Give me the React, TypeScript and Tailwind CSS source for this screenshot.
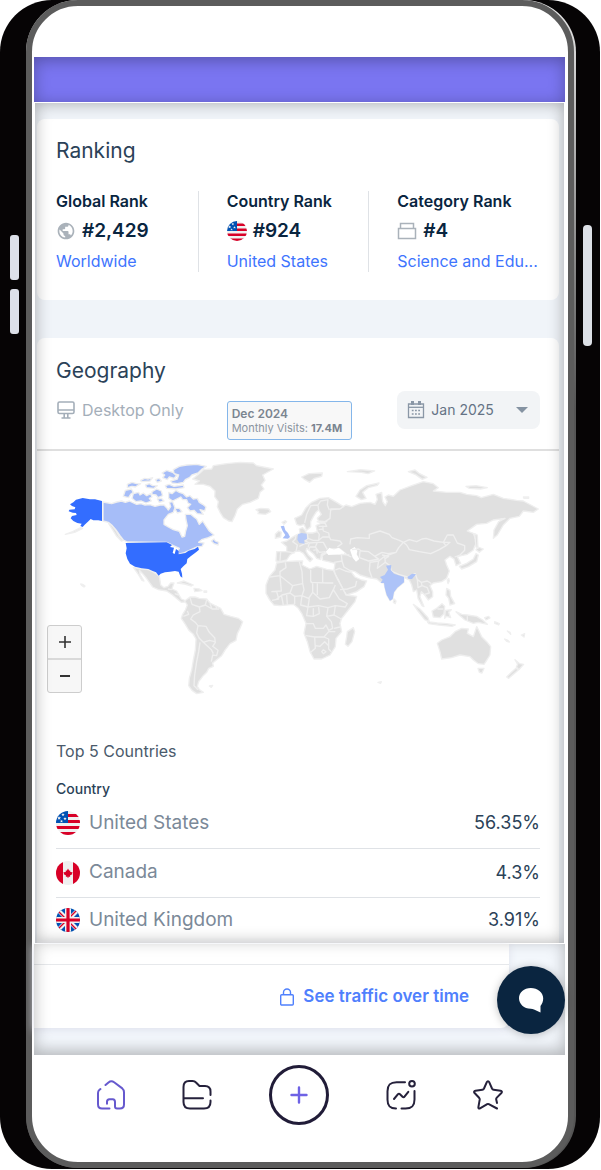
import { useState } from 'react';
import type { ReactNode } from 'react';
import { MdPublic } from 'react-icons/md';

const countries = [
  { name: 'United States', share: '56.35%', flag: 'us' },
  { name: 'Canada', share: '4.3%', flag: 'ca' },
  { name: 'United Kingdom', share: '3.91%', flag: 'gb' },
] as const;

type FlagCode = (typeof countries)[number]['flag'];

function Flag({ code, className }: { code: FlagCode; className: string }) {
  return (
    <svg viewBox="0 0 24 24" className={className} aria-hidden="true">
      <clipPath id={`flag-${code}`}>
        <circle cx="12" cy="12" r="12" />
      </clipPath>
      <g clipPath={`url(#flag-${code})`}>
        {code === 'us' && (
          <>
            <path fill="#f0f0f0" d="M0 0h24v24H0z" />
            <path fill="#d80027" d="M12 3h12v3H12zM12 9h12v3H12zM0 15h24v3H0zM0 21h24v3H0z" />
            <path fill="#0052b4" d="M0 0h12v12H0z" />
            <path
              fill="#f0f0f0"
              d="M3 5l.5 1.300H5l-1 1 .4 1.400L3 8l-1.200.7.4-1.400-1-1h1.300zM7 2l.4 1.100h1.200l-.9.8.3 1.200-1-.7-1 .7.3-1.200-.9-.8h1.200zM9 6l.4 1.100h1.200l-.9.8.3 1.200-1-.7-1 .7.3-1.200-.9-.8h1.200zM5.500 8.800l.4 1h1l-.7.7.3 1-1-.6-1 .6.3-1-.7-.7h1z"
            />
          </>
        )}
        {code === 'ca' && (
          <>
            <path fill="#f0f0f0" d="M0 0h24v24H0z" />
            <path fill="#d80027" d="M0 0h7v24H0zM17 0h7v24h-7z" />
            <path
              fill="#d80027"
              d="M12 7.500l1.200 2.200 1-.5-.2 2 .9-.8.4.8 1.300-.2-.6 1.500.6.5-2.600 1.600.2 1.100h-1.800V17h-.8v-1.300H9.800l.2-1.100L7.400 13l.6-.5-.6-1.500 1.300.2.4-.8.900.8-.2-2 1 .5z"
            />
          </>
        )}
        {code === 'gb' && (
          <>
            <path fill="#0052b4" d="M0 0h24v24H0z" />
            <path stroke="#f0f0f0" strokeWidth="4" d="M2 2l20 20M22 2L2 22" />
            <path stroke="#d80027" strokeWidth="1.400" d="M2 3l20 20M22 1L2 21" />
            <path stroke="#f0f0f0" strokeWidth="6" d="M12 0v24M0 12h24" />
            <path stroke="#d80027" strokeWidth="3.200" d="M12 0v24M0 12h24" />
          </>
        )}
      </g>
    </svg>
  );
}

function CategoryIcon() {
  return (
    <svg viewBox="0 0 20 20" className="h-5 w-5" fill="none" stroke="#aab2ba" strokeWidth="1.500" aria-hidden="true">
      <path d="M1.500 7.500h17v10h-17zM3.500 7.500v-5h13v5" />
    </svg>
  );
}

function DesktopIcon() {
  return (
    <svg viewBox="0 0 20 20" className="h-5 w-5" fill="none" stroke="#a4aeb9" strokeWidth="1.600" aria-hidden="true">
      <rect x="2" y="2" width="16" height="11.500" rx="1.500" />
      <path d="M2 10h16M8.200 13.500v4M11.800 13.500v4M5.500 18h9" />
    </svg>
  );
}

function CalendarIcon() {
  return (
    <svg viewBox="0 0 18 18" className="h-[18px] w-[18px] shrink-0" fill="none" stroke="#8a97a6" aria-hidden="true">
      <path strokeWidth="1.300" d="M1.500 3h15v13.500h-15z" />
      <path strokeWidth="1.300" d="M1.500 6.300h15" />
      <path strokeWidth="2" d="M4 1h3M11 1h3M4 3h3M11 3h3" />
      <path strokeWidth="1.600" strokeDasharray="1.800 1.400" d="M4.800 9.500h8.500M4.800 13h8.500" />
    </svg>
  );
}

const americas = [
  // greenland, iceland
  'M458,72L480,54 490,44 515,42 520,32 560,26 600,22 640,24 650,32 700,42 668,60 675,76 664,90 672,102 660,112 655,130 630,142 608,148 592,162 585,182 576,200 566,198 550,188 540,172 532,155 535,140 524,125 525,108 510,94 490,88 465,88 478,78Z',
  'M648,164l14,-4 24,2 6,8 -16,8 -22,-2 2,-6Z',
  // mexico and central america
  'M280,337L305,342 325,344 338,350 348,356 358,364 360,376 362,390 372,398 384,394 392,384 402,384 398,395 396,402 410,408 418,422 424,432 434,436 436,441 424,442 412,432 398,420 380,408 355,404 338,396 328,382 318,368 308,356 298,346 300,358 312,378 306,376 292,354Z',
  // south america
  'M434,438L450,426 465,426 478,430 500,432 510,444 525,452 542,460 552,478 572,484 595,490 608,500 600,520 592,536 588,556 570,566 556,584 545,602 530,614 518,624 520,634 506,640 500,652 488,664 476,680 472,694 478,704 490,712 470,716 456,706 446,692 448,670 455,645 460,615 466,585 468,552 460,538 446,525 436,508 424,490 428,478 436,465 442,450Z',
  'M412,384l20,-6 28,12 -6,3 -20,-6ZM462,400l16,2 8,5 -22,3ZM492,408h8v4h-8ZM508,693l10,-2 -4,6ZM122,387l6,1 7,5 -3,3 -7,-5ZM76,238l22,-8 24,-12 6,2 -24,12ZM206,206l8,2 14,18 10,18 12,12 -6,2 -14,-14 -10,-16Z',
];

const oldWorld = [
  // mainland europe and asia
  'M64,262L80,258 98,246 112,238 120,236 118,222 128,218 134,224 140,234 158,234 172,230 168,212 185,204 200,200 200,185 208,165 240,160 258,150 275,155 300,145 330,142 345,148 352,134 348,118 365,112 368,140 376,152 382,140 375,126 385,120 400,124 420,105 455,92 490,80 520,86 535,98 520,108 560,112 600,112 620,118 650,122 664,128 700,118 730,130 770,136 790,138 835,162 820,172 790,168 778,184 750,190 730,210 712,240 700,250 702,225 716,200 735,190 700,195 680,205 650,208 622,228 640,235 650,260 640,285 622,298 604,302 592,305 602,325 588,332 582,312 570,304 555,315 560,330 568,348 560,370 545,380 520,384 510,392 518,410 518,425 505,435 494,420 484,410 480,425 492,455 486,452 474,430 470,405 460,410 455,390 448,375 432,368 432,382 412,398 402,412 398,432 390,437 380,420 372,385 362,382 350,372 325,368 300,360 285,350 270,346 285,366 305,375 320,378 312,395 290,410 260,420 250,405 238,380 226,358 222,345 225,325 205,320 188,316 186,302 200,294 240,298 258,296 240,282 215,282 200,290 184,298 182,314 170,310 160,296 140,280 138,288 145,300 158,312 150,320 142,312 130,295 118,288 105,290 90,300 80,315 60,320 48,318 50,290 80,290 80,275Z',
  // scandinavia
  'M110,208L104,190 125,180 138,158 155,142 180,130 205,128 230,142 250,155 240,162 212,162 210,190 195,200 176,198 172,190 184,178 176,165 168,172 160,185 152,200 152,215 140,226 132,208 120,212Z',
  // africa
  'M50,324L75,320 110,318 128,318 126,330 150,342 170,334 200,343 220,346 232,372 245,395 258,420 290,424 285,440 265,465 245,490 240,505 245,530 228,550 226,575 210,600 185,612 162,612 150,590 142,560 132,535 138,505 125,475 115,460 100,448 60,452 42,450 30,436 18,415 18,390 28,365 45,345Z',
  'M262,530L280,518 284,530 276,560 264,574 256,568 260,545Z',
  // australia and new zealand
  'M532,565L545,555 570,545 585,530 605,520 625,522 622,535 640,545 650,515 658,530 665,545 680,560 692,575 690,600 680,616 672,628 655,626 640,615 630,605 600,600 575,608 545,612 540,590ZM654,640h18l-6,14 -8,-2Z',
  'M765,614l14,12 12,2 -14,16 -8,-8 4,-8ZM768,640l8,4 -14,12 -16,14 -6,-4 12,-12Z',
  // indonesia, new guinea, philippines
  'M460,448l20,14 24,26 4,12 -14,-6 -20,-26ZM502,500l30,4 28,2 26,4 -10,4 -40,-4 -30,-4ZM516,468l14,-8 16,-14 8,8 -2,22 -12,12 -20,-2ZM556,466l18,-2 -8,8 6,16 -12,-4 -6,6Z',
  'M588,470L605,478 622,480 650,484 668,495 682,508 655,502 640,505 615,495 600,482ZM560,400l10,6 2,18 12,22 -14,4 -4,-20 -8,-10ZM562,376l4,-6 2,8 -4,8ZM674,488l12,-4 4,5 -12,6ZM704,500l14,6 -2,4 -12,-5Z',
  // japan and sakhalin
  'M598,334L620,325 640,312 648,296 655,300 650,320 625,335 605,342ZM648,284l6,-8 16,6 -12,10ZM644,236l8,4 2,40 -6,-4Z',
  // arctic islands
  'M288,124L300,105 320,92 357,84 352,91 325,98 308,112 318,130 304,134ZM125,66l22,-10 40,-2 -2,10 -22,6 -14,12 -14,-8ZM262,50l40,-6 42,4 -20,8 -20,-4ZM445,50l20,-5 12,10 24,12 -14,6 -20,-14ZM618,94l30,-2 34,6 -20,4 -34,-2ZM790,126h16v4h-14Z',
  'M46,238l10,-10 8,4 -2,14 -16,4ZM402,432l6,6 -2,8 -6,-4ZM66,202l10,-5 4,3 -8,8ZM354,682l10,-2 -2,5ZM734,552l10,4 4,5 -8,-2ZM784,540l10,-4 -2,10ZM742,528l8,4 2,6Z',
];

const canada = [
  'M189,141L215,146 230,141 245,138 256,142 268,138 290,148 303,146 315,150 330,149 345,154 360,150 372,150 380,158 385,165 392,155 388,142 398,140 405,158 400,172 385,178 372,195 372,208 385,216 400,224 418,229 426,246 434,244 437,228 442,212 438,195 436,178 452,178 462,186 470,192 478,208 488,198 497,212 508,228 522,240 505,248 485,254 476,262 492,264 486,274 470,276 448,286 430,294 415,298 413,288 418,280 400,272 380,262 262,261 250,255 240,242 228,225 215,210 205,202 189,198Z',
  // baffin
  'M386,112L396,116 408,106 418,112 430,116 440,126 450,122 460,132 472,130 478,142 488,148 498,156 494,168 480,164 490,178 472,176 462,166 450,168 442,158 452,148 444,144 440,134 428,134 422,126 410,132 398,138 386,130Z',
  // victoria and banks
  'M256,106L274,102 280,112 272,118 266,128 250,124ZM280,116L296,112 300,120 310,114 320,122 332,116 336,126 328,130 334,138 318,144 304,138 288,140 276,130Z',
  // ellesmere
  'M400,44L418,34 440,30 470,28 499,34 484,44 474,54 456,60 448,68 436,74 430,82 412,86 396,84 392,78 412,72 416,60 402,56Z',
  'M366,54l14,-8 18,6 12,10 -8,8 -14,-4 -6,8 -14,-6 6,-8ZM376,92l12,-4 14,6 28,-4 2,8 -24,4 -28,-2ZM262,88l14,-6 14,4 12,0 -16,10 -10,-2 -14,4ZM302,76l12,-6 10,2 14,-4 -8,10 -26,2ZM336,110l14,-8 14,6 4,14 -14,6 -6,-8 -12,-2ZM316,90l12,-4 10,6 14,0 -10,8 -22,-2ZM346,74l12,-4 6,8 -12,4ZM352,132l12,-2 8,8 -14,4ZM404,160l14,0 8,10 -14,4ZM514,258l8,-6 4,6 10,4 -2,8 -12,-4Z',
];

const usa = [
  'M186,138L165,133 150,133 128,129 108,134 100,142 90,148 96,153 106,157 104,163 88,164 86,169 98,173 108,174 110,180 96,183 92,190 100,198 112,204 125,206 121,213 128,216 134,209 146,198 152,192 160,196 175,196 186,198Z',
  'M257,264L380,262 396,270 390,276 402,278 398,294 404,297 408,282 416,288 416,298 436,294 446,287 464,282 474,275 477,284 468,292 452,304 442,312 440,325 430,334 422,342 426,356 427,368 421,364 416,350 405,348 390,350 375,352 362,356 356,362 348,352 338,348 325,342 305,340 285,335 270,326 262,312 257,295 260,280Z',
];

const americaBorders =
  'M450,428L456,448 478,456 480,470 460,480 452,492 466,502 474,512 498,514 508,532 524,548 526,562 518,574 534,586 530,602 518,600 514,620M430,484L446,478 442,468M474,512L470,534 478,550 490,562 508,556 524,560M480,562L476,590 470,620 464,660 462,692 474,704M490,562L514,584 520,596M478,456L496,450 500,434M496,450L516,462 538,462M510,446L516,462M528,452L530,464M384,402L396,404M404,416L416,420';

const oldWorldBorders = [
  // africa
  'M30,366L60,362 60,350 78,338 76,322M60,362L98,392 128,386 126,350 118,320M60,362L64,408 34,410M98,392L90,414 66,420 50,432M128,386L132,404 126,422 104,424 90,414M152,345L152,378 158,386 158,412 146,430 126,422M152,382L200,384 220,384M188,343L188,384M158,412L180,432 208,428 220,404 226,390M104,424L104,448M126,422L122,450 144,456 148,430M144,456L176,452 204,458 226,452 256,456 262,446 238,432 220,404M144,456L140,482 160,484 160,460M138,506L160,506 166,520 190,520 198,510 206,526 218,520 214,500 200,484 204,458M226,452L222,480 244,492M200,484L222,480M164,546L192,546 206,530 226,530M138,542L164,546 166,580 152,592M166,572L180,574 194,560 206,572 206,582 214,590M192,546L206,552 206,572M190,584l8,6 -8,6 -5,-6ZM222,520L240,516M64,420L70,450M80,420L82,450M50,410L56,432 36,436M172,384L172,420M176,456L178,476 160,484',
  // europe
  'M62,290L60,318M80,290L104,294M108,240L106,252 98,260 112,270 108,290M142,236L144,250 160,256 176,256 178,238 172,230M144,266L134,266 118,274M144,250L136,258 148,264 172,262 190,262 202,284M172,262L166,276 178,292 196,290M176,256L188,246 208,246 206,234 190,228 188,212M208,246L212,254 240,258 246,266 232,276M148,264L144,278M166,276L150,276 146,286M170,200L196,206 200,214 176,214M176,224L190,222M176,165L174,150 152,152 140,178 134,204M174,150L182,138 204,134 202,150 208,165M160,286L170,284 172,296',
  // asia
  'M270,268L272,252 292,248 328,250 328,238 360,228 388,238 396,248 418,256 430,262 416,278 408,292 384,296 366,292 344,304 326,290 304,288 296,282 276,284M430,262L448,254 470,260 486,252 498,250 522,258 550,262 558,272 538,284 512,296 478,290 448,284 440,270 430,262M550,262L562,240 580,240 592,264 614,272 614,286 600,300M558,272L570,262 550,262M584,306L600,300M408,292L374,304 376,322 390,332 394,348 416,358 442,366 466,356 472,374 484,382 502,378 514,386M374,304L356,318 330,322 328,346 336,368M356,318L352,340 376,322M298,308L326,318 356,312 344,304M298,308L300,288M222,322L246,318 244,298 268,300M246,318L252,336 272,348M226,345L238,340 256,348 272,352M240,404L262,402 286,394 290,378M472,374L474,398 486,392 484,382M486,392L502,398 508,414 494,418M252,296L274,306M366,300L386,304 374,312M622,484L622,498M532,462L550,462',
];

// Shapes share one coordinate space; the eastern half starts 660 units to the right
function WorldMap() {
  return (
    <svg viewBox="-9 -12 1566 762" className="block w-full" role="img" aria-label="Visits by country">
      <g stroke="#efefef" strokeWidth="4" strokeLinejoin="round">
        <g fill="#e0e0e0">
          {americas.map((d) => (
            <path key={d} d={d} />
          ))}
        </g>
        <g fill="#a6bdf8">
          {canada.map((d) => (
            <path key={d} d={d} />
          ))}
        </g>
        <g fill="#336dff" stroke="none">
          {usa.map((d) => (
            <path key={d} d={d} />
          ))}
        </g>
        <path d={americaBorders} fill="none" />
        <g transform="translate(660 0)">
          <g fill="#e0e0e0">
            {oldWorld.map((d) => (
              <path key={d} d={d} />
            ))}
          </g>
          <path fill="#fff" stroke="none" d="M270,284L284,276 292,288 290,298 298,312 288,320 278,308Z" />
          <path fill="#fff" stroke="none" d="M198,290L208,278 222,284 236,278 258,296 240,298 205,300Z" />
          {oldWorldBorders.map((d) => (
            <path key={d} d={d} fill="none" />
          ))}
          <g stroke="none">
            <path fill="#a6bdf8" d="M62,214L72,212 76,226 84,234 90,246 84,251 68,250 76,240 68,228Z" />
            <path fill="#b7caf8" d="M114,238L124,234 140,236 141,252 132,256 134,266 118,264 112,254Z" />
            <path
              fill="#adc3f8"
              d="M378,332L394,330 392,345 402,356 420,362 432,366 432,382 412,398 402,412 398,432 390,437 380,420 374,398 372,384 362,384 368,374 360,366 374,360 384,344ZM442,366L456,356 468,358 456,372 446,372Z"
            />
          </g>
        </g>
      </g>
    </svg>
  );
}

interface RankProps {
  label: string;
  value: string;
  link: string;
  icon: ReactNode;
  divider?: boolean;
}

function Rank({ label, value, link, icon, divider }: RankProps) {
  return (
    <div className={divider ? 'min-w-0 border-r border-[#dfe2e6]' : 'min-w-0'}>
      <h3 className="text-base leading-5 font-semibold text-[#092540]">{label}</h3>
      <p className="mt-2 flex h-6 items-center gap-1.5 text-[19px] font-semibold text-[#092540]">
        {icon}
        {value}
      </p>
      <a href="#" className="mt-2 block text-base leading-[21px] whitespace-nowrap text-[#3e74fe]">
        {link}
      </a>
    </div>
  );
}

function RankingCard() {
  return (
    <section className="rounded-lg bg-white px-[19px] pt-[18px] pb-7">
      <h2 className="text-[21px] leading-7 text-[#2b4258]">Ranking</h2>
      <div className="mt-[26px] grid grid-cols-3 gap-7">
        <Rank
          label="Global Rank"
          value="#2,429"
          link="Worldwide"
          icon={<MdPublic className="h-5 w-5 text-[#aab2ba]" />}
          divider
        />
        <Rank
          label="Country Rank"
          value="#924"
          link="United States"
          icon={<Flag code="us" className="h-5 w-5" />}
          divider
        />
        <Rank label="Category Rank" value="#4" link="Science and Edu..." icon={<CategoryIcon />} />
      </div>
    </section>
  );
}

function GeographyCard() {
  const [month, setMonth] = useState('Jan 2025');

  return (
    <section className="rounded-t-lg bg-white pt-[19px]">
      <div className="px-[19px]">
        <h2 className="text-[21px] leading-7 text-[#2b4258]">Geography</h2>
        <div className="mt-1.5 grid grid-cols-3 items-start gap-7">
          <p className="flex h-[38px] items-center gap-1.5 text-base whitespace-nowrap text-[#a4aeb9]">
            <DesktopIcon />
            Desktop Only
          </p>
          <div className="mt-2.5 h-[39px] w-[125px] rounded-[3px] border border-[#84b6ea] bg-[#f8f8f8] p-1 text-[11px] leading-[15px] whitespace-nowrap text-[#8a949f]">
            <p className="text-xs leading-[15px] font-semibold text-[#7b8590]">Dec 2024</p>
            <p>
              Monthly Visits: <b className="font-bold text-[#7b8590]">17.4M</b>
            </p>
          </div>
          <label className="relative flex h-[38px] items-center gap-1.5 rounded-lg bg-[#f2f4f6] px-2.5">
            <CalendarIcon />
            <select
              aria-label="Month"
              value={month}
              onChange={(e) => setMonth(e.target.value)}
              className="w-full appearance-none bg-transparent text-sm text-[#657385] outline-none"
            >
              <option>Jan 2025</option>
              <option>Dec 2024</option>
            </select>
            <svg viewBox="0 0 12 6" className="pointer-events-none absolute right-3 h-1.5 w-3" aria-hidden="true">
              <path fill="#8593a2" d="M0 0h12L6 6z" />
            </svg>
          </label>
        </div>
      </div>

      <div className="relative mt-[9px] border-t-2 border-[#dfdfdf]">
        <WorldMap />
        <div className="absolute bottom-3 left-2.5 flex w-[35px] flex-col divide-y-2 divide-[#d9d9d9] rounded-[3px] border border-[#cdcdcd] bg-[#f7f7f7] text-[#333]">
          <button aria-label="Zoom in" className="flex h-[34px] items-center justify-center">
            <svg viewBox="0 0 12 12" className="h-3 w-3" stroke="currentColor" strokeWidth="1.600">
              <path d="M6 0v12M0 6h12" />
            </svg>
          </button>
          <button aria-label="Zoom out" className="flex h-8 items-center justify-center">
            <svg viewBox="0 0 10 12" className="h-3 w-2.5" stroke="currentColor" strokeWidth="2">
              <path d="M0 6h10" />
            </svg>
          </button>
        </div>
      </div>

      <div className="px-[19px] pt-[34px]">
        <h3 className="text-base leading-6 text-[#4a5a6b]">Top 5 Countries</h3>
        <table className="mt-4 w-full">
          <thead>
            <tr>
              <th colSpan={2} className="text-left text-sm leading-5 font-medium text-[#2b4258]">
                Country
              </th>
            </tr>
          </thead>
          <tbody className="divide-y divide-[#dfe2e6]">
            {countries.map((country) => (
              <tr key={country.name} className="h-[49px] last:h-[46px]">
                <td className="text-[19px] text-[#7b8998]">
                  <span className="flex items-center gap-[9px]">
                    <Flag code={country.flag} className="h-6 w-6" />
                    {country.name}
                  </span>
                </td>
                <td className="text-right text-lg text-[#2b4258]">{country.share}</td>
              </tr>
            ))}
          </tbody>
        </table>
      </div>
    </section>
  );
}

function TrafficPanel() {
  return (
    <section className="relative mt-px bg-[#f3f7fc] pb-[27px]">
      <div className="mr-14 rounded-br-lg bg-white pt-5 shadow-[0_2px_8px_#dfe1ec]">
        <div className="flex h-16 items-center justify-end border-t border-[#e6e8eb] pr-10">
          <a href="#" className="flex items-center gap-2 text-[17px] font-semibold text-[#4f80fd]">
            <svg viewBox="0 0 16 18" className="h-[18px] w-4" fill="none" stroke="currentColor" strokeWidth="1.400" aria-hidden="true">
              <rect x="1.700" y="6.800" width="12.600" height="10.200" rx="1" />
              <path d="M4.500 6.800V4.500a3.500 3.500 0 0 1 7 0v2.300" />
            </svg>
            See traffic over time
          </a>
        </div>
      </div>
      <div className="pointer-events-none absolute inset-0 shadow-[inset_0_-4px_16px_rgba(0,0,0,0.28)]" />
      <button
        aria-label="Open chat"
        className="absolute top-[22px] right-0 flex h-[68px] w-[68px] items-center justify-center rounded-full bg-[#0a2540] shadow-[0_1px_8px_rgba(0,0,0,0.25)]"
      >
        <svg viewBox="0 0 26 26" className="h-[26px] w-[26px]" fill="#fff" aria-hidden="true">
          <path d="M12.800 1C6 1 1 5.500 1 11.300s5 10.500 11.800 10.500c1.200 0 2.200.1 3.200.7l6.500 3v-6.500c1.700-2 2.700-4.500 2.700-7.700C25.200 5.500 19.600 1 12.800 1z" />
        </svg>
      </button>
    </section>
  );
}

function BottomNav() {
  return (
    <nav className="flex h-[107px] items-start justify-center gap-[57px] pt-2.5 text-[#25213b]">
      <button aria-label="Home" className="flex h-[60px] items-center text-[#6659ce]">
        <svg viewBox="0 0 28 30" className="h-[30px] w-7" fill="none" stroke="currentColor" strokeWidth="2" strokeLinecap="round" strokeLinejoin="round">
          <path d="M3.500 9L2.500 9.800C1.500 10.600 1 11.500 1 13v11.300C1 27 2.400 28.500 5 28.500h7.500" />
          <path d="M8.500 5l3-2.600c1.800-1.500 3.700-1.600 5.600-.2l8.200 6.200c1.200 1 1.700 2 1.700 3.800v12.300c0 2.600-1.400 4-4 4h-3c-1.500 0-2-.8-2-2V22c0-1.800-.7-2.800-2.200-2.800h-3.300c-1.600 0-2.500.9-2.500 2.600v2" />
        </svg>
      </button>
      <button aria-label="Projects" className="flex h-[60px] items-center">
        <svg viewBox="0 0 30 30" className="h-[30px] w-[30px]" fill="none" stroke="currentColor" strokeWidth="2" strokeLinecap="round" strokeLinejoin="round">
          <path d="M28.500 15v-3.500c0-4-2-5.500-5.500-5.500h-5.500L14 2.500C13 1.300 12 1 10.500 1H7C3.300 1 1.500 3 1.500 7v15c0 4.500 2.300 6.500 6.500 6.500h14c4.200 0 6.500-2 6.500-6.500v-1.500M2 18.300h19" />
        </svg>
      </button>
      <button
        aria-label="Create"
        className="flex h-[60px] w-[60px] items-center justify-center rounded-full border-[3px] border-[#211c38] text-[#6e62e5]"
      >
        <svg viewBox="0 0 18 18" className="h-[18px] w-[18px]" stroke="currentColor" strokeWidth="2.400" strokeLinecap="round">
          <path d="M9 1.500v15M1.500 9h15" />
        </svg>
      </button>
      <button aria-label="Analytics" className="flex h-[60px] items-center">
        <svg viewBox="0 0 30 30" className="h-[30px] w-[30px]" fill="none" stroke="currentColor" strokeWidth="2" strokeLinecap="round" strokeLinejoin="round">
          <path d="M19 2.200h-8.500c-6.500 0-9 2.500-9 9v8.500c0 6.200 2.300 8.800 8.500 8.800M15.500 28.500h4c6.500 0 9-2.500 9-9V11M8 19l4-4.800c.7-.8 1.300-.7 2 0l2.500 2.500c.7.700 1.500.7 2 0l3.800-4.900" />
          <circle cx="26" cy="3.800" r="2.800" />
        </svg>
      </button>
      <button aria-label="Favorites" className="flex h-[60px] items-center">
        <svg viewBox="0 0 30 30" className="h-[30px] w-[30px]" fill="none" stroke="currentColor" strokeWidth="2" strokeLinecap="round" strokeLinejoin="round">
          <path d="M24 28.500l-8.200-4.400c-.6-.3-1-.3-1.600 0L7 28.300c-1 .6-1.800 0-1.600-1.200l1.300-7.400c.1-.8-.1-1.300-.6-1.900l-4.500-4.800c-.9-1-.5-2.100.8-2.300l7-1c.8-.1 1.200-.4 1.600-1.200l2.800-6.300c.6-1.300 1.800-1.300 2.400 0L19 8.500c.4.800.8 1.100 1.600 1.200l7 1c1.300.2 1.700 1.300.8 2.300l-4.600 4.600c-.6.600-.7 1.100-.6 1.900l.8 3.500" />
        </svg>
      </button>
    </nav>
  );
}

export default function App() {
  return (
    <div className="bg-white font-['Inter','Noto_Sans',sans-serif]">
      <div className="relative mr-px rounded-[52px] bg-[#060405] pr-6 pb-px pl-[26px]">
        {/* Side buttons */}
        <div className="absolute top-[235px] left-2.5 h-[45px] w-[9px] rounded-[3px] bg-[#dce0e9]" />
        <div className="absolute top-[289px] left-2.5 h-[45px] w-[9px] rounded-[3px] bg-[#dce0e9]" />
        <div className="absolute top-[225px] right-2 h-[121px] w-[9px] rounded-[4px] bg-[#dce0e6]" />

        <div className="rounded-[52px] bg-linear-to-b from-[#e8e8e8] to-[#555] to-35% pr-0.5">
          <div className="rounded-[52px] border-6 border-[#5c5c5c] bg-white pr-[3px] pl-0.5">
            <div className="mt-[51px] h-[45px] bg-[#7a75f1] shadow-[inset_0_3px_16px_rgba(0,0,0,0.3)]" />
            <main>
              <div className="relative mr-px ml-px mt-px flex flex-col gap-[38px] bg-[#f0f4f9] pt-4 pr-[5px] pl-0.5">
                <RankingCard />
                <GeographyCard />
                <div className="pointer-events-none absolute inset-0 shadow-[inset_0_0_16px_rgba(0,0,0,0.32)]" />
              </div>
              <TrafficPanel />
            </main>
            <BottomNav />
          </div>
        </div>
      </div>
    </div>
  );
}
